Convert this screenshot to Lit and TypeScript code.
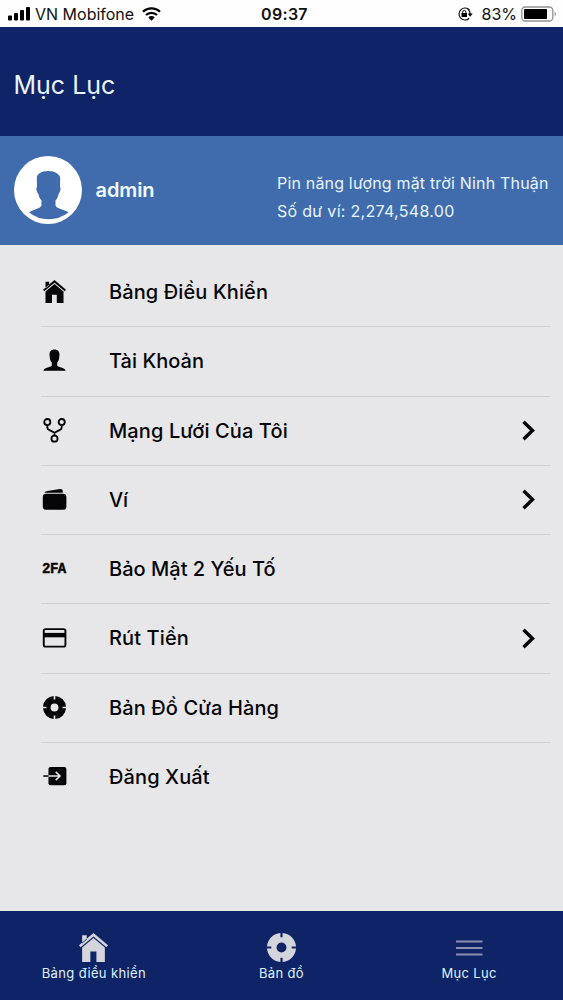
import { LitElement, html, css, svg, nothing } from "lit";
import { customElement, property } from "lit/decorators.js";

const HOUSE = svg`<path d="M2.600 1.800h3.800v3.600L2.600 8.600z M12 0 0 10.200l1.300 1.500L12 2.900l10.700 8.800L24 10.200z"/><path d="M12 4.200 2.600 12V24h6.800v-8.700h5V24h7V12z"/>`;
const RING = svg`<path fill-rule="evenodd" d="M11.100 0V3.600h1.800V0A12 12 0 0 1 24 11.100H20.400v1.800H24A12 12 0 0 1 12.900 24V20.400h-1.800V24A12 12 0 0 1 0 12.900H3.600v-1.800H0A12 12 0 0 1 11.100 0zM12 7.900a4.100 4.100 0 1 0 0 8.200 4.100 4.100 0 0 0 0-8.200z"/>`;

const ICONS: Record<string, unknown> = {
  home: HOUSE,
  ring: RING,
  user: svg`<path d="M12 .6C8.300 .6 6.700 2.800 6.800 6.200L7.100 9.500C7.400 11.700 8.300 13.200 9.200 14.200V17C9.200 19.300 1 19 .4 22.800H23.600C23 19 14.800 19.300 14.800 17V14.200C15.700 13.200 16.600 11.700 16.900 9.500L17.200 6.200C17.300 2.800 15.700 .6 12 .6z"/>`,
  network: svg`<g fill="none" stroke="currentColor" stroke-width="1.900"><circle cx="4.500" cy="3.200" r="3.200"/><circle cx="19.500" cy="3.200" r="3.200"/><circle cx="12" cy="20.500" r="3.200"/><path d="M4.500 6.400v2.400c0 1.400.7 2 1.900 2.600L12 14.300l5.600-2.900c1.200-.6 1.900-1.200 1.900-2.600V6.400M12 14.300v3"/></g>`,
  wallet: svg`<rect x="-.2" y="5.900" width="24.600" height="16.900" rx="3.600"/><path d="M1.400 4.900C2.200 3.900 3.500 3.400 4.800 3.100L17.600 1.100c1.800-.3 3 .7 3 2.300v1.500z"/>`,
  card: svg`<rect x=".8" y="3.300" width="22.600" height="18.200" rx="2" fill="none" stroke="currentColor" stroke-width="2"/><rect x=".8" y="7.200" width="22.600" height="4.600"/>`,
  logout: svg`<rect x="5.700" y="2" width="18.700" height="19.200" rx="2.200"/><path d="M.3 11.500h5.500" stroke="currentColor" stroke-width="1.600"/><path d="M5.700 11.500h12M13.300 7.200l4.500 4.300-4.500 4.300" fill="none" stroke="#e7e6e9" stroke-width="1.600"/>`,
};

@customElement("menu-row")
class MenuRow extends LitElement {
  @property() icon = "";
  @property() label = "";
  @property({ type: Boolean }) expandable = false;
  @property({ type: Number }) fit = 0.11;

  static styles = css`
    :host {
      display: flex;
      align-items: center;
      box-sizing: border-box;
      height: 69.250px;
      margin: 0 13px 0 41px;
      border-bottom: 1.500px solid #d0cfd2;
      color: #050507;
    }
    :host(:last-of-type) { border-bottom-color: transparent; }
    .icon { width: 23px; height: 23px; margin: 0 0 1px 1.500px; overflow: visible; fill: currentColor; }
    .badge {
      width: 23.500px;
      margin-left: 1px;
      font: 700 14px/20px "Liberation Mono", monospace;
      -webkit-text-stroke: .4px currentColor;
      letter-spacing: -.5px;
    }
    .label {
      flex: 1;
      margin-left: 43.500px;
      font: 550 20px/26px Inter, sans-serif;
      white-space: nowrap;
    }
    .chevron { width: 15px; height: 21px; margin-right: 14px; }
  `;

  render() {
    return html`
      ${this.icon === "2fa"
        ? html`<span class="badge">2FA</span>`
        : html`<svg class="icon" viewBox="0 0 24 24">${ICONS[this.icon]}</svg>`}
      <span class="label" style="letter-spacing:${this.fit}px">${this.label}</span>
      ${this.expandable
        ? html`<svg class="chevron" viewBox="0 0 15 21"><path d="M2.500 1.800 11.500 10.500 2.500 19.200" fill="none" stroke="#050507" stroke-width="3.400"/></svg>`
        : nothing}
    `;
  }
}

@customElement("app-root")
class AppRoot extends LitElement {
  static styles = css`
    :host {
      display: flex;
      flex-direction: column;
      height: 1000px;
      overflow: hidden;
      background: #e7e6e9;
      font-family: Inter, sans-serif;
      white-space: nowrap;
    }
    .status {
      display: grid;
      grid-template-columns: 1fr auto 1fr;
      align-items: center;
      height: 27px;
      box-sizing: border-box;
      padding: 1px 6px 0 8px;
      background: #fefefe;
      color: #111;
      font-size: 16px;
      line-height: 22px;
    }
    .carrier, .power { display: flex; align-items: center; }
    .carrier { gap: 4px; }
    .carrier svg, .power svg { margin-bottom: 1px; }
    .wifi { margin-left: 4px; }
    .time { margin-left: 4px; font-weight: 600; letter-spacing: .3px; }
    .power { justify-content: flex-end; gap: 4px; }
    .lock { margin-right: 5px; }
    .title {
      display: flex;
      align-items: center;
      height: 109px;
      box-sizing: border-box;
      padding: 7px 13.500px 0;
      background: #0e2466;
      color: #e9f5ff;
      font-size: 25px;
      font-weight: 400;
    }
    .profile {
      display: flex;
      align-items: center;
      height: 109px;
      box-sizing: border-box;
      padding: 0 14px 2px;
      background: #406cae;
      color: #e6f5ff;
    }
    .name { margin-left: 13.500px; padding-top: 1px; font-size: 20px; font-weight: 600; letter-spacing: -.1px; color: #f1faff; }
    .facts { margin-left: auto; width: 272px; padding-top: 15px; font-size: 16px; line-height: 28px; }
    .owner { letter-spacing: .18px; }
    .balance { letter-spacing: .3px; }
    .menu { flex: 1; padding-top: 13px; }
    .tabs {
      display: grid;
      grid-template-columns: repeat(3, 1fr);
      height: 89px;
      background: #0e2466;
      color: #dff1ff;
      font-size: 13px;
      line-height: 18px;
      letter-spacing: .36px;
    }
    .tab { display: flex; flex-direction: column; align-items: center; padding-top: 22px; }
    .tab svg { width: 29px; height: 29px; margin-bottom: 2px; fill: #d4d4dc; }
  `;

  render() {
    return html`
      <div class="status">
        <div class="carrier">
          <svg width="23" height="14" viewBox="0 0 23 14"><rect x="0" y="8.500" width="4" height="5" rx="1"/><rect x="6" y="6" width="4" height="7.500" rx="1"/><rect x="12" y="3" width="4" height="10.500" rx="1"/><rect x="18" y="0" width="4" height="13.500" rx="1"/></svg>
          <span>VN Mobifone</span>
          <svg class="wifi" width="19" height="14" viewBox="0 0 19 14"><g fill="none" stroke="#000" stroke-width="2.300"><path d="M1 4.800a12.200 12.200 0 0 1 17 0"/><path d="M4 8a8 8 0 0 1 11 0"/></g><path d="M9.500 13.700 6.300 10.400a4.600 4.600 0 0 1 6.400 0z"/></svg>
        </div>
        <div class="time">09:37</div>
        <div class="power">
          <svg class="lock" width="16" height="14" viewBox="0 0 16 14"><path d="M12.500 3A6 6 0 1 0 12.200 11.300M13.200 7A6 6 0 0 0 10.700 2.100" fill="none" stroke="#111" stroke-width="1.200"/><path d="M10.700 6.500h5l-2.500 3.200z"/><rect x="4.500" y="6" width="5.500" height="4" rx=".5"/><path d="M5.700 6.200V5a1.600 1.600 0 0 1 3.200 0v1.200" fill="none" stroke="#111"/></svg>
          <span>83%</span>
          <svg width="36" height="16" viewBox="0 0 36 16"><rect x=".8" y="1" width="31" height="14" rx="3.500" fill="none" stroke="#929292" stroke-width="1.300"/><rect x="3" y="3" width="23" height="10" rx="1"/><path d="M33.700 5.500q2.500 2.500 0 5z" fill="#929292"/></svg>
        </div>
      </div>
      <div class="title">Mục Lục</div>
      <div class="profile">
        <svg width="68" height="68" viewBox="0 0 68 68">
          <circle cx="34" cy="34" r="34" fill="#fff"/>
          <path fill="#406cae" d="M34 15C27 15 22.500 18.500 22.800 22L23 31C22 31 22.400 36 24.200 37.500C25 41 26 43 27.500 44.500V49.500C26 53 18 53.500 15.200 56.500Q23.500 63.300 34.500 63.300T54.500 56.500C51 53.500 43 53 41.500 49.500V44.500C43 43 44 41 44.800 37.500C46.600 36 47 31 46 31L46.200 22C46.200 18.500 41 15 34 15z"/>
        </svg>
        <span class="name">admin</span>
        <div class="facts">
          <div class="owner">Pin năng lượng mặt trời Ninh Thuận</div>
          <div class="balance">Số dư ví: 2,274,548.00</div>
        </div>
      </div>
      <div class="menu">
        <menu-row icon="home" label="Bảng Điều Khiển"></menu-row>
        <menu-row icon="user" label="Tài Khoản" fit="0.02"></menu-row>
        <menu-row icon="network" label="Mạng Lưới Của Tôi" expandable></menu-row>
        <menu-row icon="wallet" label="Ví" fit="-0.2" expandable></menu-row>
        <menu-row icon="2fa" label="Bảo Mật 2 Yếu Tố" fit="0.02"></menu-row>
        <menu-row icon="card" label="Rút Tiền" expandable></menu-row>
        <menu-row icon="ring" label="Bản Đồ Cửa Hàng"></menu-row>
        <menu-row icon="logout" label="Đăng Xuất"></menu-row>
      </div>
      <div class="tabs">
        <div class="tab"><svg viewBox="0 0 24 24">${HOUSE}</svg>Bảng điều khiển</div>
        <div class="tab"><svg viewBox="0 0 24 24">${RING}</svg>Bản đồ</div>
        <div class="tab"><svg viewBox="0 0 29 29"><path d="M1 8.500h26.500M1 15h26.500M1 21.500h26.500" stroke="#8c90ae" stroke-width="2.200"/></svg>Mục Lục</div>
      </div>
    `;
  }
}
